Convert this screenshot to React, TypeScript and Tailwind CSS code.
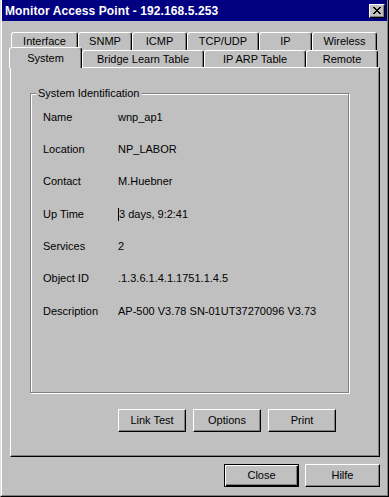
import React from 'react';

const raised =
  'border-t border-l border-t-white border-l-white border-r border-b border-r-black border-b-black shadow-[inset_-1px_-1px_0_#808080]';

const rowOne = [
  { label: 'Interface', w: 'w-[67px]' },
  { label: 'SNMP', w: 'w-[54px]' },
  { label: 'ICMP', w: 'w-[55px]' },
  { label: 'TCP/UDP', w: 'w-[72px]' },
  { label: 'IP', w: 'w-[53px]' },
  { label: 'Wireless', w: 'w-[65px]' },
];

const rowTwo = [
  { label: 'Bridge Learn Table', w: 'w-[122px]' },
  { label: 'IP ARP Table', w: 'w-[102px]' },
  { label: 'Remote', w: 'w-[72px]' },
];

const fields = [
  { label: 'Name', value: 'wnp_ap1' },
  { label: 'Location', value: 'NP_LABOR' },
  { label: 'Contact', value: 'M.Huebner' },
  { label: 'Up Time', value: '3 days, 9:2:41', caret: true },
  { label: 'Services', value: '2' },
  { label: 'Object ID', value: '.1.3.6.1.4.1.1751.1.4.5' },
  { label: 'Description', value: 'AP-500 V3.78 SN-01UT37270096 V3.73' },
];

const Tab: React.FC<{ label: string; w: string; h: string }> = ({ label, w, h }) => (
  <div
    className={`${w} ${h} flex items-center justify-center rounded-t-[3px] border-t border-l border-t-white border-l-white border-r border-r-black shadow-[inset_-1px_0_0_#808080]`}
  >
    {label}
  </div>
);

const Button: React.FC<{ label: string; w: string; isDefault?: boolean }> = ({ label, w, isDefault }) => (
  <button
    type="button"
    className={`${w} h-[23px] flex items-center justify-center bg-[#c0c0c0] ${
      isDefault
        ? 'border border-black shadow-[inset_1px_1px_0_#fff,inset_-1px_-1px_0_#000,inset_-2px_-2px_0_#808080]'
        : raised
    }`}
  >
    {label}
  </button>
);

export default function App() {
  return (
    <div
      className="w-[389px] h-[497px] bg-[#c0c0c0] text-black text-[11px] flex flex-col border-l border-l-[#dfdfdf] border-r border-r-black border-b border-b-black"
      style={{ fontFamily: '"Liberation Sans", Arial, sans-serif' }}
    >
      <div className="flex-1 flex flex-col border-l border-l-white border-r border-r-[#808080] border-b border-b-[#808080]">
        {/* title bar */}
        <div className="h-[21px] bg-[#000080] flex items-center justify-between pl-[3px] pr-[2px]">
          <span className="text-white font-bold text-[12px] tracking-[0.1px]">
            Monitor Access Point - 192.168.5.253
          </span>
          <div className={`w-[16px] h-[14px] bg-[#c0c0c0] flex items-center justify-center ${raised}`}>
            <svg width="8" height="7" viewBox="0 0 8 7">
              <path d="M0 0h2v1h1v1h2V1h1V0h2v1H7v1H6v1H5v1h1v1h1v1h1v1H6V6H5V5H3v1H2v1H0V6h1V5h1V4h1V3H2V2H1V1H0z" fill="#000" />
            </svg>
          </div>
        </div>

        <div className="pl-[8px] flex flex-col">
          {/* back tab row */}
          <div className="mt-[11px] ml-[1px] flex h-[18px]">
            {rowOne.map((t) => (
              <Tab key={t.label} label={t.label} w={t.w} h="h-[18px]" />
            ))}
          </div>

          {/* front tab row */}
          <div className="-mt-[3px] flex items-end h-[20px] relative z-10">
            <div className="w-[73px] h-[21px] -mb-px -ml-px flex items-start justify-center pt-[2px] bg-[#c0c0c0] rounded-t-[3px] border-t border-l border-t-white border-l-white border-r border-r-black shadow-[inset_-1px_0_0_#808080]">
              System
            </div>
            {rowTwo.map((t) => (
              <Tab key={t.label} label={t.label} w={t.w} h="h-[17px]" />
            ))}
          </div>

          {/* panel */}
          <div className="w-[370px] h-[390px] flex flex-col border-t border-l border-t-white border-l-white border-r border-b border-r-black border-b-black shadow-[inset_-1px_-1px_0_#808080]">
            <div className="ml-[19px] mt-[25px] w-[319px] h-[300px] relative border border-[#808080] shadow-[1px_1px_0_#fff,inset_1px_1px_0_#fff]">
              <span className="absolute -top-[8px] left-[5px] px-[2px] bg-[#c0c0c0] leading-[14px]">
                System Identification
              </span>
              <div className="pt-[7px] pl-[12px] flex flex-col">
                {fields.map((f) => (
                  <div key={f.label} className="h-[32.3px] flex items-center">
                    <span className="w-[75px]">{f.label}</span>
                    <span className="flex items-center">
                      {f.caret && <span className="w-px h-[13px] bg-black" />}
                      {f.value}
                    </span>
                  </div>
                ))}
              </div>
            </div>

            <div className="ml-[107px] mt-[16px] flex gap-[7px]">
              <Button label="Link Test" w="w-[68px]" />
              <Button label="Options" w="w-[68px]" />
              <Button label="Print" w="w-[68px]" />
            </div>
          </div>

          {/* dialog buttons */}
          <div className="mt-[7px] w-[370px] flex justify-end gap-[6px]">
            <Button label="Close" w="w-[75px]" isDefault />
            <Button label="Hilfe" w="w-[75px]" />
          </div>
        </div>
      </div>
    </div>
  );
}
